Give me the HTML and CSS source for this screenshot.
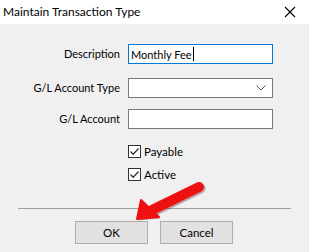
FILE: index.html
```html
<!DOCTYPE html>
<html>
<head>
<meta charset="utf-8">
<link rel="stylesheet" href="styles.css">
</head>
<body>
<div class="dialog">
  <div class="titlebar">
    <span class="title">Maintain Transaction Type</span>
    <svg class="close" width="12" height="12" viewBox="0 0 12 12"><path d="M1 1L11 11M11 1L1 11" stroke="#000" stroke-width="1.1"/></svg>
  </div>
  <div class="body">
    <div class="form">
      <label class="lbl r1">Description</label>
      <div class="input focus r1">Monthly Fee<span class="caret"></span></div>
      <label class="lbl r2">G/L Account Type</label>
      <div class="input combo r2"><svg width="10" height="6" viewBox="0 0 10 6"><path d="M0.5 0.5L5 5L9.5 0.5" fill="none" stroke="#555" stroke-width="1"/></svg></div>
      <label class="lbl r3">G/L Account</label>
      <div class="input r3"></div>
    </div>
    <div class="checks">
      <div class="check"><span class="box"><svg width="11" height="11" viewBox="0 0 11 11"><path d="M1.5 5.5L4.2 8.2L9.5 2.5" fill="none" stroke="#333" stroke-width="1.3"/></svg></span>Payable</div>
      <div class="check"><span class="box"><svg width="11" height="11" viewBox="0 0 11 11"><path d="M1.5 5.5L4.2 8.2L9.5 2.5" fill="none" stroke="#333" stroke-width="1.3"/></svg></span>Active</div>
    </div>
    <div class="sep"></div>
    <div class="buttons">
      <div class="btn">OK</div>
      <div class="btn">Cancel</div>
    </div>
  </div>
  <svg class="arrow" width="309" height="252" viewBox="0 0 309 252">
    <g transform="translate(1.5,1.5)" opacity="0.35">
      <line x1="199" y1="187" x2="152" y2="210" stroke="#5a2020" stroke-width="10" stroke-linecap="round"/>
      <polygon points="137,219 141,200 159,217" fill="#5a2020"/>
    </g>
    <line x1="199" y1="187" x2="152" y2="210" stroke="#ee1111" stroke-width="10" stroke-linecap="round"/>
    <polygon points="137,219 141,200 159,217" fill="#ee1111" stroke="#ee1111" stroke-width="2" stroke-linejoin="round"/>
  </svg>
</div>
</body>
</html>
```
FILE: styles.css
```css
html, body {
  margin: 0;
  padding: 0;
}
body {
  width: 309px;
  height: 252px;
  overflow: hidden;
  font-family: Lato, "Noto Sans", sans-serif;
  font-size: 11px;
  color: #000;
}
.dialog {
  position: relative;
  width: 309px;
  height: 252px;
  background: #f0f0f0;
}
.titlebar {
  height: 24px;
  background: #fff;
  display: flex;
  align-items: center;
  justify-content: space-between;
  padding: 0 13px 0 3px;
}
.title {
  font-size: 12px;
  color: #000;
  line-height: 1;
}
.close {
  display: block;
}
.body {
  padding-top: 20px;
}
.form {
  display: grid;
  grid-template-columns: 120px 145px;
  column-gap: 8px;
  row-gap: 0;
}
.r2 { margin-top: 14px; }
.r3 { margin-top: 11px; }
.lbl {
  text-align: right;
  height: 20px;
  line-height: 20px;
  font-size: 11px;
  color: #000;
}
.input {
  box-sizing: border-box;
  height: 20px;
  background: #fff;
  border: 1px solid #7a7a7a;
  line-height: 17px;
  padding-left: 2px;
  font-size: 11px;
  display: flex;
  align-items: center;
}
.input.focus {
  border-color: #0078d7;
}
.caret {
  display: inline-block;
  width: 1px;
  height: 14px;
  background: #000;
  margin-left: 1px;
}
.combo {
  justify-content: flex-end;
  padding-right: 6px;
}
.combo svg { display: block; }
.checks {
  margin-left: 128px;
  margin-top: 16px;
  display: flex;
  flex-direction: column;
  gap: 10px;
}
.check {
  display: flex;
  align-items: center;
  height: 13px;
  font-size: 11.5px;
}
.box {
  box-sizing: border-box;
  width: 13px;
  height: 13px;
  border: 1px solid #333;
  background: #fff;
  margin-right: 3px;
  display: flex;
}
.box svg { display: block; }
.sep {
  margin: 27px 18px 0 18px;
  height: 1px;
  background: #a0a0a0;
}
.buttons {
  display: flex;
  gap: 12px;
  margin-left: 75px;
  margin-top: 12px;
}
.btn {
  box-sizing: border-box;
  width: 73px;
  height: 23px;
  background: #e1e1e1;
  border: 1px solid #adadad;
  text-align: center;
  line-height: 21px;
  font-size: 11.5px;
}
.arrow {
  position: absolute;
  left: 0;
  top: 0;
  pointer-events: none;
}
```
